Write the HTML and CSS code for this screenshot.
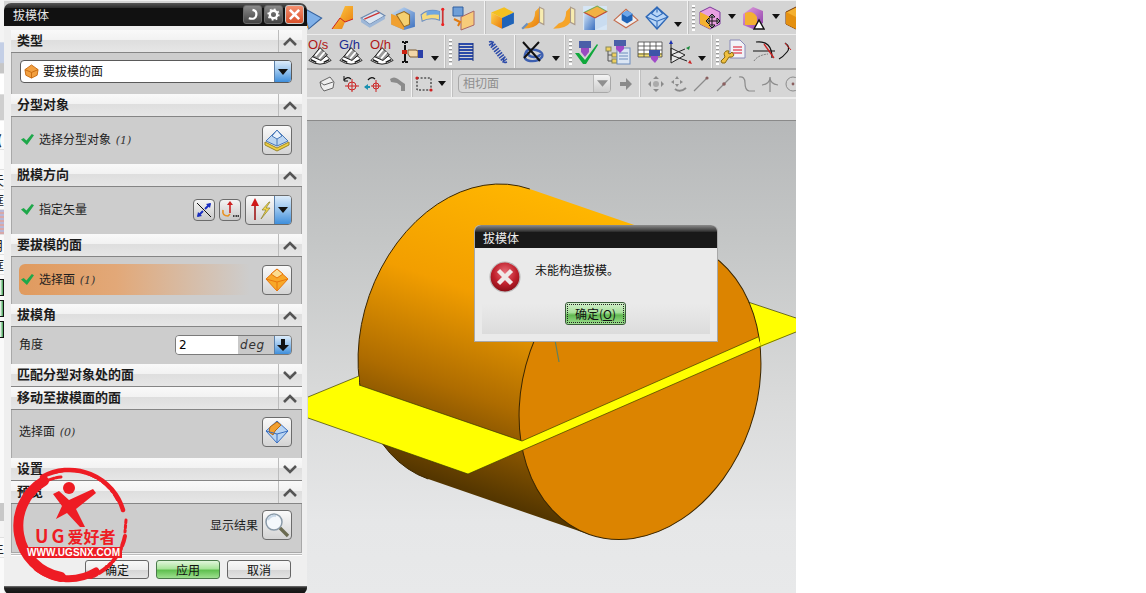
FILE: index.html
```html
<!DOCTYPE html>
<html lang="zh">
<head>
<meta charset="utf-8">
<title>拔模体</title>
<link rel="stylesheet" href="styles.css">
</head>
<body>
<svg class="defs" width="0" height="0" aria-hidden="true">
  <defs>
    <linearGradient id="side" gradientUnits="userSpaceOnUse" x1="535" y1="190" x2="435" y2="479">
      <stop offset="0" stop-color="#ffb600"/><stop offset=".38" stop-color="#f29e00"/><stop offset=".7" stop-color="#ae6c00"/><stop offset="1" stop-color="#543600"/>
    </linearGradient>
    <linearGradient id="org" x1="0" y1="0" x2="1" y2="1"><stop offset="0" stop-color="#ffd24a"/><stop offset="1" stop-color="#e8780a"/></linearGradient>
    <linearGradient id="blu" x1="0" y1="0" x2="1" y2="1"><stop offset="0" stop-color="#cfe3f7"/><stop offset="1" stop-color="#3a6fbf"/></linearGradient>
    <linearGradient id="pur" x1="0" y1="0" x2="1" y2="1"><stop offset="0" stop-color="#e6a2e0"/><stop offset="1" stop-color="#8a3ba8"/></linearGradient>
    <radialGradient id="err" cx=".5" cy=".35" r=".7"><stop offset="0" stop-color="#e8707a"/><stop offset=".55" stop-color="#c0202c"/><stop offset="1" stop-color="#7c0a12"/></radialGradient>
    <symbol id="shell" viewBox="0 0 26 26">
      <path d="M1 20 Q13 28 25 20 L20 15 Q13 20 6 15Z" fill="#fff" stroke="#111"/>
      <path d="M5 16 L13 6 L21 14 L14 20Z" fill="#999" stroke="#111"/>
      <path d="M8 15 L14 8 M12 18 L18 11" stroke="#fff" stroke-width="2"/>
      <path d="M3 19 L9 22 M23 19 L17 22" stroke="#111" stroke-width="1.500"/>
    </symbol>
    <symbol id="coil" viewBox="0 0 24 24">
      <path d="M5 4h14M5 7h14M5 10h14M5 13h14M5 16h14M5 19h14" stroke="#2c4aa8" stroke-width="2"/>
      <path d="M5 3v18M19 3v18" stroke="#16307f" stroke-width="1"/>
    </symbol>
    <symbol id="dd" viewBox="0 0 8 5"><path d="M0 0h8L4 5z" fill="#111"/></symbol>
    <symbol id="chk" viewBox="0 0 12 12"><path d="M0 6l2.500-1.500L5 7 10 1l2 1-6.500 9z" fill="#1ea84a"/></symbol>
    <symbol id="up" viewBox="0 0 14 9"><path d="M1 8L7 2l6 6" fill="none" stroke="#555" stroke-width="2.600"/></symbol>
    <symbol id="down" viewBox="0 0 14 9"><path d="M1 1l6 6 6-6" fill="none" stroke="#555" stroke-width="2.600"/></symbol>
  </defs>
</svg>

<div class="screen">
  <div class="app">
    <div class="tb tb1">
      <div class="tg g30">
        <svg class="ic" viewBox="0 0 24 24"><path d="M2 2l18 10-12 10z" fill="#7fb0e8" stroke="#36639f"/><path d="M2 2l6 20-6-4z" fill="#f0a030"/></svg>
        <svg class="ic" viewBox="0 0 24 26"><path d="M9 13L14 1h8v13l-8 3-3 7H1z" fill="url(#org)"/><path d="M1 24l8-11 5 4 8-3" fill="none" stroke="#c22" stroke-width="1"/></svg>
        <svg class="ic" viewBox="0 0 24 24"><path d="M1 12L15 5l8 5-14 8z" fill="#dbe6f2" stroke="#6a86ad"/><path d="M1 12v4l8 5 14-8v-3L9 18z" fill="#9db7d8"/><path d="M4 13l14-6" stroke="#c33" stroke-width="1.200"/></svg>
        <svg class="ic" viewBox="0 0 24 24"><path d="M1 8l12-6 10 5v13l-10 3-12-5z" fill="url(#blu)"/><path d="M1 8l12 5v10l-12-5z" fill="#f0a030"/><path d="M6 9l7-3 5 3v9l-5 2z" fill="#f5d070" stroke="#9a6b20"/></svg>
        <svg class="ic" viewBox="0 0 24 24"><path d="M1 9Q8 3 18 6v8Q9 11 2 15z" fill="#f6da7c" stroke="#6b8fc4"/><path d="M6 6Q11 4 18 6v3Q10 8 6 10z" fill="#6fa6e0"/><path d="M21 3v16" stroke="#c33" stroke-width="1.600"/><circle cx="21" cy="4" r="1.400" fill="#e22"/><circle cx="21" cy="18" r="1.400" fill="#e22"/></svg>
        <svg class="ic" viewBox="0 0 24 26"><path d="M2 2h10v9H2z" fill="#6f9fd8" stroke="#315f9f"/><path d="M10 12l13-6v14l-13 5z" fill="#f7cb7a" stroke="#a66"/><path d="M3 14l6 3-2 4" fill="none" stroke="#e07a10" stroke-width="2"/></svg>
      </div>
      <i class="sep s1"></i>
      <div class="tg g31">
        <svg class="ic" viewBox="0 0 24 24"><path d="M2 7l12-5 9 5-11 5z" fill="#f4c020"/><path d="M2 7l10 5v10L2 17z" fill="url(#org)"/><path d="M12 12l11-5v10l-11 5z" fill="#1f63b8"/></svg>
        <svg class="ic" viewBox="0 0 24 24"><path d="M18 2v14Q14 22 2 22l5-5Q14 16 14 6z" fill="url(#org)"/><path d="M18 2l4 2v14l-4-2z" fill="#f7ecb0" stroke="#a98"/><path d="M2 22l5-5" stroke="#6a90c0" stroke-width="2"/></svg>
        <svg class="ic" viewBox="0 0 24 24"><path d="M18 2v14Q14 22 2 22l5-5Q14 16 14 6z" fill="#f6a428"/><path d="M18 2l4 2v14l-4-2z" fill="#f7ecb0" stroke="#a98"/></svg>
        <svg class="ic" viewBox="0 0 24 24"><rect x="1" y="1" width="22" height="22" fill="#d6e6f6"/><path d="M2 7L14 1l9 5-11 6z" fill="#f2b144" stroke="#7a5"/><path d="M2 7l10 5v11H2z" fill="url(#blu)"/><path d="M12 12l11-6v12l-11 5z" fill="#c9dcf0"/><path d="M2 7l10 5 11-6" fill="none" stroke="#c43"/></svg>
        <svg class="ic" viewBox="0 0 24 24"><path d="M1 14L12 4l11 10-11 7z" fill="#eee" stroke="#c46a4a"/><path d="M8 8l5-3 5 3v6l-5 3-5-3z" fill="#1f63b8"/><path d="M8 8l5 3 5-3-5-3z" fill="#6fa8ea"/></svg>
        <svg class="ic" viewBox="0 0 24 24"><path d="M12 2l10 9-10 11L2 11z" fill="#b9d6f7" stroke="#2f69b8" stroke-width="1.300"/><path d="M2 11l10 4 10-4M12 15v7M12 2v5M7 8l5-6 5 6-5 3z" fill="none" stroke="#2f69b8"/></svg>
        <svg class="dd d1" viewBox="0 0 8 5"><use href="#dd"/></svg>
      </div>
      <i class="sep s2"></i>
      <i class="grip"></i>
      <svg class="ic i-m1" viewBox="0 0 24 26"><path d="M2 7l10-5 10 5v12l-10 5-10-5z" fill="#e8a0e0" stroke="#7a3a9a"/><path d="M2 7l10 5v12l-10-5z" fill="#f4b030"/><path d="M14 9v14M8 16h14M14 9l-3 3h6zM14 23l-3-3h6zM8 16l3-3v6zM22 16l-3-3v6z" fill="#fff" stroke="#111"/></svg>
      <svg class="dd d2" viewBox="0 0 8 5"><use href="#dd"/></svg>
      <svg class="ic i-m2" viewBox="0 0 24 26"><path d="M2 9l10-7 10 4v12l-10 6-10-4z" fill="url(#pur)"/><path d="M4 8q8-3 12 4v8H4z" fill="#f4b030"/><path d="M13 24l5-9 5 9z" fill="#fff" stroke="#111" stroke-width="1.400"/></svg>
      <svg class="dd d3" viewBox="0 0 8 5"><use href="#dd"/></svg>
      <svg class="ic i-m3" viewBox="0 0 24 26"><path d="M2 7l10-5 10 5v12l-10 5-10-5z" fill="#f4b030" stroke="#7a3a0a"/><path d="M2 7l10 5v12l-10-5z" fill="#e49010"/></svg>
    </div>

    <div class="tb tb2">
      <div class="tg pad2">
        <div class="txic"><svg viewBox="0 0 26 26"><use href="#shell"/></svg><span class="lab red">O/s</span></div>
        <div class="txic"><svg viewBox="0 0 26 26"><use href="#shell"/></svg><span class="lab navy">G/h</span></div>
        <div class="txic"><svg viewBox="0 0 26 26"><use href="#shell"/></svg><span class="lab red">O/h</span></div>
        <svg class="ic" viewBox="0 0 24 24"><path d="M2 2h6M2 22h6M5 2v20" stroke="#111" stroke-width="2" stroke-dasharray="2 1 20"/><rect x="2" y="10" width="5" height="4" fill="#c21"/><path d="M8 10h8l2 1v6h-8l-2-3z" fill="#f2d6a8" stroke="#7a5a30"/><rect x="18" y="10" width="5" height="8" fill="#2a3fa8"/></svg>
      </div>
      <svg class="dd d4" viewBox="0 0 8 5"><use href="#dd"/></svg>
      <i class="sep s3"></i>
      <i class="grip"></i>
      <svg class="ic i-c1" viewBox="0 0 24 24"><use href="#coil"/></svg>
      <svg class="ic i-c2" viewBox="0 0 24 24"><path d="M5 3l14 18" stroke="#2c4aa8" stroke-width="6" stroke-dasharray="1.500 1.200"/><path d="M3 2q5-2 3 4M21 22q-5 2-3-4" fill="none" stroke="#2c4aa8" stroke-width="1.500"/></svg>
      <i class="sep s4"></i>
      <svg class="ic i-c3" viewBox="0 0 24 24"><path d="M6 12q-4 8 4 9t12-4q2-5-6-7t-10 2zM8 12q0 5 6 5t6-3" fill="none" stroke="#3d5fb0" stroke-width="2.400"/><path d="M3 2l17 19M19 2L4 18" stroke="#111" stroke-width="2"/></svg>
      <svg class="dd d5" viewBox="0 0 8 5"><use href="#dd"/></svg>
      <i class="sep s5"></i>
      <i class="grip"></i>
      <svg class="ic i-v1" viewBox="0 0 26 26"><path d="M2 14l4 0 6 7L24 5l1 1-12 19h-3z" fill="#10a83c"/><rect x="6" y="2" width="12" height="7" fill="#4a5fa8"/><path d="M8 9h8v4l-4 5-4-5z" fill="#9a4ac0"/></svg>
      <svg class="ic i-v2" viewBox="0 0 26 26"><rect x="1" y="8" width="5" height="4" fill="#f0d060" stroke="#885"/><rect x="7" y="14" width="5" height="4" fill="#f0d060" stroke="#885"/><rect x="7" y="20" width="5" height="4" fill="#f0d060" stroke="#885"/><path d="M3 12v10h4M3 16h4" fill="none" stroke="#555"/><rect x="12" y="9" width="13" height="16" fill="#dbe6f4" stroke="#6c8cbc"/><path d="M14 14h9M14 17h9M14 20h9" stroke="#6c8cbc"/><rect x="9" y="1" width="12" height="6" fill="#4a5fa8"/><path d="M11 7h8v3l-4 4-4-4z" fill="#a04ac8"/></svg>
      <svg class="ic i-v3" viewBox="0 0 26 26"><path d="M1 3h24v15H1z" fill="#fff"/><rect x="1" y="14" width="24" height="4" fill="#f4e070"/><path d="M1 3h24M1 7h24M1 11h24M1 15h24M1 18h24M1 3v15M7 3v15M13 3v15M19 3v15M25 3v15" stroke="#444" stroke-width=".8"/><rect x="12" y="11" width="11" height="6" fill="#3c55a8"/><path d="M14 17h7v3l-3 4-4-4z" fill="#a04ac8"/></svg>
      <svg class="ic i-v4" viewBox="0 0 26 26"><path d="M4 9l14 7-14 8z" fill="#e6e6e6" stroke="#222"/><path d="M4 3v18M4 16l14-6M4 16l16 6" stroke="#222"/><path d="M4 1l-2 4h4z" fill="#1a2fb0"/><path d="M19 9l4-2-1 4z" fill="#1a8a3a"/><path d="M21 24l4 1-2-4z" fill="#c22"/></svg>
      <svg class="dd d6" viewBox="0 0 8 5"><use href="#dd"/></svg>
      <i class="sep s6"></i>
      <i class="grip"></i>
      <svg class="ic i-t1" viewBox="0 0 26 26"><path d="M10 1h10l5 5v13H10z" fill="#f2f2f6" stroke="#8a8ab8"/><path d="M13 8h9M13 11h9M13 14h9" stroke="#e25a6a" stroke-width="1.600"/><path d="M2 24l3 0 4-6q4 1 5-2l-2-3-2 2-2-1 1-2q-4-1-5 3l1 3-4 4z" fill="#f0c040" stroke="#8a6a10"/></svg>
      <svg class="ic i-t2" viewBox="0 0 26 26"><path d="M1 12h22" stroke="#111"/><path d="M4 3q16-2 16 16" fill="none" stroke="#111" stroke-width="1.200"/><path d="M12 5l10 14" stroke="#c22" stroke-width="1.300"/><path d="M2 22q4-6 14-7" fill="none" stroke="#777" stroke-dasharray="2 1"/></svg>
      <svg class="ic i-t3" viewBox="0 0 26 26"><path d="M8 4q6 4 2 9t-8 7" fill="none" stroke="#111" stroke-width="1.200"/><path d="M8 4l6 7" stroke="#c22"/></svg>
    </div>

    <div class="tb tb3">
      <svg class="sm s-a" viewBox="0 0 18 18"><path d="M2 7l10-5 4 5-1 6-9 3-3-4z" fill="#eee" stroke="#666"/><path d="M2 7l4 3 9-3" fill="none" stroke="#666"/></svg>
      <svg class="sm s-b" viewBox="0 0 18 18"><path d="M2 5q3-4 7-1" fill="none" stroke="#111" stroke-width="1.300"/><path d="M2 1v5h4" fill="none" stroke="#111"/><circle cx="10" cy="11" r="4" fill="none" stroke="#c22"/><path d="M3 11h14M10 4v13" stroke="#c22"/></svg>
      <svg class="sm s-c" viewBox="0 0 18 18"><path d="M4 5q3-4 7-1" fill="none" stroke="#111" stroke-width="1.300"/><path d="M1 12h5" stroke="#1a90b0" stroke-width="2"/><path d="M0 12l4-3v6z" fill="#1a90b0"/><circle cx="12" cy="11" r="3" fill="none" stroke="#c22"/><path d="M7 11h10M12 5v12" stroke="#c22"/></svg>
      <svg class="sm s-d" viewBox="0 0 18 18"><path d="M1 4q4-3 8 0l4 3 3 2v7h-4v-5L8 8 2 7z" fill="#8b8b8b"/></svg>
      <i class="sep s7"></i>
      <svg class="sm s-e" viewBox="0 0 18 18"><rect x="2" y="3" width="14" height="12" fill="none" stroke="#111" stroke-dasharray="2 1.600"/><circle cx="2" cy="3" r="1.600" fill="#c22"/><circle cx="16" cy="15" r="1.600" fill="#c22"/></svg>
      <svg class="dd d7" viewBox="0 0 8 5"><use href="#dd"/></svg>
      <i class="sep s8"></i>
      <div class="combo"><span class="combo-t">相切面</span><span class="combo-b"><svg viewBox="0 0 12 7"><path d="M0 0h12L6 7z" fill="#8f8f8f"/></svg></span></div>
      <svg class="sm s-f" viewBox="0 0 14 14"><path d="M1 5h6V1l6 6-6 6V9H1z" fill="#8a8a8a"/></svg>
      <i class="sep s9"></i>
      <svg class="sm s-g" viewBox="0 0 18 18"><path d="M9 1l3 3H6zM9 17l-3-3h6zM1 9l3-3v6zM17 9l-3 3V6z" fill="#8b8b8b"/><circle cx="9" cy="9" r="3" fill="#aaa"/></svg>
      <svg class="sm s-h" viewBox="0 0 18 18"><path d="M8 1l2 3H6zM8 12l-2-3h4zM2 7l3-2v4zM14 7l-3 2V5z" fill="#8b8b8b"/><path d="M6 14q5 4 11-1" fill="none" stroke="#8b8b8b" stroke-width="2"/></svg>
      <svg class="sm s-i" viewBox="0 0 18 18"><path d="M2 16L15 3" stroke="#8b8b8b" stroke-width="1.200"/><circle cx="15" cy="3" r="1.600" fill="#8b6060"/></svg>
      <svg class="sm s-i" viewBox="0 0 18 18"><path d="M2 16L16 2" stroke="#8b8b8b" stroke-width="1.200"/><circle cx="9" cy="9" r="1.800" fill="#8b6060"/></svg>
      <svg class="sm s-i" viewBox="0 0 18 18"><path d="M1 2q6-1 6 6t4 8h6" fill="none" stroke="#8b8b8b" stroke-width="1.200"/></svg>
      <svg class="sm s-i" viewBox="0 0 18 18"><path d="M1 10q8-1 8-8 0 7 8 8M9 2v15" fill="none" stroke="#8b8b8b" stroke-width="1.200"/></svg>
      <svg class="sm s-i" viewBox="0 0 18 18"><circle cx="9" cy="9" r="7" fill="none" stroke="#8b8b8b"/><circle cx="9" cy="9" r="1.400" fill="#8b6060"/></svg>
    </div>

    <div class="tb tb4"></div>

    <div class="viewport">
      <svg class="scene" viewBox="0 121 796 472">
        <polygon points="740,299 748,302 796,318 796,332 740,356" fill="#ff0"/>
        <path d="M529.800,189 A116.300 153.600 19.300 0 0 428.200,479 L589.200,534.500 L690.800,244.500 Z" fill="url(#side)"/>
        <path d="M529.800,189 A116.300 153.600 19.300 0 0 428.200,479" fill="none" stroke="#3a2600"/>
        <g transform="translate(640 389.500) rotate(19.300)"><ellipse rx="116.300" ry="153.600" fill="#dc8400" stroke="#3a2600" stroke-width="1"/></g>
        <polygon points="308,397 359,376 359,385 522,441 758,337 761,346 468,474 308,418" fill="#ff0"/>
        <path d="M308,397 L359,376 M359,385 L522,441 L758,337 M761,346 L468,474 L308,418 M748,302 L796,318" fill="none" stroke="#3a3a00" stroke-width=".7"/>
        <path d="M796,332 L761,346" stroke="#3a3a00" stroke-width=".7"/>
        <path d="M555,340 L559,362" stroke="#5f8060" stroke-width="1.200"/>
      </svg>
    </div>
  </div>

  <div class="strip">
    <span class="top"></span>
    <span class="fr fr1">(</span>
    <span class="fr fr0"></span>
    <span class="fr fr2">天</span>
    <span class="fr fr3">框</span>
    <span class="fr fr4"></span>
    <span class="fr fr5">月</span>
    <span class="fr fr6">框</span>
    <span class="fr box"></span>
    <span class="fr box"></span>
    <span class="fr box"></span>
    <span class="fr fr7"></span>
    <span class="fr fr8">主</span>
  </div>

  <section class="dlg">
    <header class="dlg-title">
      <span class="dlg-name">拔模体</span>
      <span class="tbtn"><svg viewBox="0 0 14 14"><path d="M7 2q5 1 4 6t-8 3" fill="none" stroke="#fff" stroke-width="2.400"/></svg></span>
      <span class="tbtn"><svg viewBox="0 0 14 14"><circle cx="7" cy="7" r="4" fill="none" stroke="#fff" stroke-width="2.600"/><circle cx="7" cy="7" r="5.800" fill="none" stroke="#fff" stroke-width="1.600" stroke-dasharray="2 2.500"/></svg></span>
      <span class="tbtn close"><svg viewBox="0 0 14 14"><path d="M2 2l10 10M12 2L2 12" stroke="#fff" stroke-width="2.800"/></svg></span>
    </header>
    <div class="panel">
      <div class="hd"><span class="hd-t">类型</span><span class="hd-c"><svg viewBox="0 0 14 9"><use href="#up"/></svg></span></div>
      <div class="bd b-type">
        <div class="select">
          <svg class="sel-ic" viewBox="0 0 16 16"><path d="M8 1l7 5-1 6-6 3-6-3-1-6z" fill="#f2a040" stroke="#c86a10"/><path d="M1 6l7 3 7-3M8 9v6" fill="none" stroke="#c86a10"/></svg>
          <span class="sel-t">要拔模的面</span>
          <span class="bluebtn"><svg viewBox="0 0 10 6"><path d="M0 0h10L5 6z" fill="#111"/></svg></span>
        </div>
      </div>

      <div class="hd"><span class="hd-t">分型对象</span><span class="hd-c"><svg viewBox="0 0 14 9"><use href="#up"/></svg></span></div>
      <div class="bd b-46">
        <svg class="chk" viewBox="0 0 12 12"><use href="#chk"/></svg>
        <span class="lbl">选择分型对象 <em>(1)</em></span>
        <span class="bigbtn"><svg viewBox="0 0 26 26"><path d="M2 14l11-11 11 11-11 5z" fill="#bcd6f2" stroke="#4878b8"/><path d="M8 9l5-6 5 6-5 3z" fill="#e8f1fb" stroke="#4878b8"/><path d="M13 12v7" stroke="#4878b8"/><path d="M1 15l12 6 12-6v3l-12 6-12-6z" fill="#f0d040" stroke="#99862a"/></svg></span>
      </div>

      <div class="hd"><span class="hd-t">脱模方向</span><span class="hd-c"><svg viewBox="0 0 14 9"><use href="#up"/></svg></span></div>
      <div class="bd b-46">
        <svg class="chk" viewBox="0 0 12 12"><use href="#chk"/></svg>
        <span class="lbl">指定矢量</span>
        <span class="smbtn"><svg viewBox="0 0 18 18"><path d="M2 2l14 14" stroke="#111"/><path d="M10 8l5-5M8 10l-5 5" stroke="#1a2fc0" stroke-width="2"/><path d="M16 2l-5 1 4 4zM2 16l5-1-4-4z" fill="#1a2fc0"/></svg></span>
        <span class="smbtn sb2"><svg viewBox="0 0 18 18"><path d="M9 2v10" stroke="#c22" stroke-width="1.600"/><path d="M9 0l-3 4h6z" fill="#c22"/><path d="M2 9q-1 6 5 6l2-2" fill="none" stroke="#e89020" stroke-width="1.600"/><path d="M12 15h1.500M14.500 15h1.500M16.500 15h1.500" stroke="#111" stroke-width="1.600"/></svg></span>
        <span class="split">
          <span class="split-a"><svg viewBox="0 0 28 26"><path d="M9 3v20" stroke="#a01818" stroke-width="1.600"/><path d="M9 1L5 9h8z" fill="#d01818"/><path d="M23 5l-7 8h4l-5 9 9-11h-4l4-6z" fill="#f4d848" stroke="#8a8030" stroke-width=".7"/></svg></span>
          <span class="bluebtn"><svg viewBox="0 0 10 6"><path d="M0 0h10L5 6z" fill="#111"/></svg></span>
        </span>
      </div>

      <div class="hd"><span class="hd-t">要拔模的面</span><span class="hd-c"><svg viewBox="0 0 14 9"><use href="#up"/></svg></span></div>
      <div class="bd b-46">
        <div class="hi">
          <svg class="chk" viewBox="0 0 12 12"><use href="#chk"/></svg>
          <span class="lbl">选择面 <em>(1)</em></span>
        </div>
        <span class="bigbtn"><svg viewBox="0 0 26 26"><path d="M13 2l11 10-11 12L2 12z" fill="#f8a828" stroke="#e8760c"/><path d="M7 7l6-5 6 5-6 4z" fill="#fbdc90" stroke="#e8760c"/><path d="M2 12l11 3 11-3M13 15v9" fill="none" stroke="#e8760c"/></svg></span>
      </div>

      <div class="hd"><span class="hd-t">拔模角</span><span class="hd-c"><svg viewBox="0 0 14 9"><use href="#up"/></svg></span></div>
      <div class="bd b-36">
        <span class="lbl plain">角度</span>
        <div class="field"><span class="f-v">2</span><span class="f-u">deg</span><span class="bluebtn inner2"><svg viewBox="0 0 12 12"><path d="M4 0h4v6h4l-6 6-6-6h4z" fill="#111"/></svg></span></div>
      </div>

      <div class="hd"><span class="hd-t">匹配分型对象处的面</span><span class="hd-c"><svg viewBox="0 0 14 9"><use href="#down"/></svg></span></div>

      <div class="hd"><span class="hd-t">移动至拔模面的面</span><span class="hd-c"><svg viewBox="0 0 14 9"><use href="#up"/></svg></span></div>
      <div class="bd b-47">
        <span class="lbl plain">选择面 <em>(0)</em></span>
        <span class="bigbtn"><svg viewBox="0 0 26 26"><path d="M13 2l11 10-11 12L2 12z" fill="#b8d4f2" stroke="#3a6fc0"/><path d="M6 8l7-5 4 3-6 6-2 4-4-3z" fill="#f2a030" stroke="#b86a10"/><path d="M2 12l11 3 11-3M13 15v9" fill="none" stroke="#3a6fc0"/></svg></span>
      </div>

      <div class="hd"><span class="hd-t">设置</span><span class="hd-c"><svg viewBox="0 0 14 9"><use href="#down"/></svg></span></div>

      <div class="hd"><span class="hd-t">预览</span><span class="hd-c"><svg viewBox="0 0 14 9"><use href="#up"/></svg></span></div>
      <div class="bd end">
        <span class="lbl plain right">显示结果</span>
        <span class="bigbtn"><svg viewBox="0 0 26 26"><circle cx="10" cy="10" r="8" fill="#f4f8fc" stroke="#8a9aa8" stroke-width="1.500"/><path d="M4 8q3-5 8-4" fill="none" stroke="#c8d8e8" stroke-width="2"/><path d="M16 16l8 8" stroke="#6a6a50" stroke-width="3.400"/></svg></span>
      </div>
    </div>
    <div class="foot">
      <button class="btn">确定</button>
      <button class="btn green">应用</button>
      <button class="btn">取消</button>
    </div>
    <div class="dlg-bottom"></div>
  </section>

  <svg class="logo" viewBox="0 0 120 122">
    <g fill="none" stroke="#ee1c24" stroke-linecap="round">
      <path d="M52 113 A52 52 0 0 1 35 17" stroke-width="10"/>
      <path d="M87 107 A52 52 0 0 1 28 104" stroke-width="7"/>
      <path d="M33 13 A56 56 0 0 1 114 46" stroke-width="4.500"/>
      <path d="M45 9 A54 54 0 0 1 108 36" stroke-width="2" stroke-dasharray="9 3 2 3"/>
      <path d="M116 72 A56 56 0 0 1 82 113" stroke-width="4" stroke-dasharray="10 3 3 2"/>
      <path d="M20 30 A50 50 0 0 1 52 13" stroke-width="3" stroke-dasharray="6 2"/>
      <path d="M117 56 L116 68" stroke-width="3" stroke-dasharray="3 2"/>
    </g>
    <circle cx="60" cy="24" r="6" fill="#ee1c24"/>
    <path d="M44 30 L50 27 L60 36 L84 25 L87 29 L67 45 L76 63 L71 63 L58 49 L47 55 L53 42 Z" fill="#ee1c24"/>
    <text class="logo-a" x="26" y="79"><tspan class="logo-ug">UG</tspan>爱好者</text>
    <rect class="logo-band" x="17" y="83" width="96" height="11"/>
    <text class="logo-b" x="18" y="92" textLength="93">WWW.UGSNX.COM</text>
  </svg>

  <section class="msg">
    <header class="msg-title">拔模体</header>
    <div class="msg-body">
      <svg class="msg-ic" viewBox="0 0 32 32"><circle cx="16" cy="16" r="15" fill="url(#err)" stroke="#bbb" stroke-width="1.200"/><path d="M9.500 9.500l13 13M22.500 9.500l-13 13" stroke="#f0e8e8" stroke-width="4.400"/></svg>
      <span class="msg-t">未能构造拔模。</span>
    </div>
    <div class="msg-foot"><button class="ok">确定(<u>O</u>)</button></div>
  </section>
</div>
</body>
</html>
```

FILE: styles.css
```css
* { box-sizing: border-box; }
html, body { margin: 0; padding: 0; background: #fff; }
body { font-family: "Noto Sans CJK SC", "Liberation Sans", sans-serif; overflow: hidden; }
.defs { position: absolute; }
.screen { position: relative; width: 1146px; height: 593px; overflow: hidden; background: #fff; }
.app { width: 796px; height: 593px; display: flex; flex-direction: column; }

/* toolbars */
.tb { display: flex; align-items: center; flex: none; background: #d4d4d4; padding-left: 298px; overflow: hidden; }
.tb1 { height: 35px; border-top: 1px solid #f0f0f0; border-bottom: 1px solid #ececec; padding-left: 300px; }
.tb2 { height: 35px; background: #d2d2d2; border-bottom: 2px solid #a9a9a9; }
.tb3 { height: 29px; background: #d6d6d6; border-bottom: 2px solid #ececec; }
.tb4 { height: 22px; background: #dbdbdb; border-bottom: 1px solid #8a8a8a; }
.tg { display: flex; align-items: center; flex: none; }
.g30 { gap: 4px; }
.g31 { gap: 5px; }
.ic { width: 24px; height: 24px; flex: none; display: block; }
.tb1 .ic { width: 26px; height: 26px; }
.txic { position: relative; width: 26px; height: 28px; flex: none; }
.txic svg { position: absolute; left: 0; top: 4px; width: 26px; height: 24px; }
.lab { position: absolute; left: 1px; top: 0; font: 13px/13px "Liberation Sans", sans-serif; }
.red { color: #b01818; }
.navy { color: #1a2a90; }
.pad2 { margin-left: 9px; gap: 5px; }
.dd { width: 8px; height: 5px; flex: none; margin-top: 14px; }
.d1 { margin-left: -1px; }
.d2 { margin-left: 5px; margin-top: -2px; }
.d3 { margin-left: 7px; margin-top: -2px; }
.d4 { margin-left: 7px; }
.d5 { margin-left: 8px; }
.d6 { margin-left: 5px; }
.d7 { margin-left: 5px; margin-top: 0; }
.sep { display: block; flex: none; width: 2px; align-self: stretch; background: linear-gradient(90deg, #f2f2f2 50%, #c0c0c0 50%); }
.s1 { margin-left: 8px; margin-right: 3px; }
.s2 { margin-left: 5px; }
.s3 { margin-left: 5px; }
.s4 { margin-left: 4px; }
.s5 { margin-left: 4px; }
.s6 { margin-left: 5px; }
.s7 { margin-left: 4px; }
.s8 { margin-left: 5px; }
.s9 { margin-left: 6px; }
.grip { display: block; flex: none; width: 3px; height: 26px; margin-left: 3px; background: repeating-linear-gradient(180deg, #fff 0 2px, #9a9a9a 2px 3px, transparent 3px 4px); }
.tb1 .i-m1 { margin-left: 2px; }
.tb1 .i-m2 { margin-left: 5px; width: 24px; }
.tb1 .i-m3 { margin-left: 3px; }
.i-c1 { margin-left: 2px; }
.i-c2 { margin-left: 8px; }
.i-c3 { margin-left: 4px; }
.i-v1 { margin-left: 1px; width: 26px; height: 26px; }
.i-v2 { margin-left: 6px; width: 26px; height: 26px; }
.i-v3 { margin-left: 6px; width: 26px; height: 26px; }
.i-v4 { margin-left: 4px; width: 26px; height: 26px; }
.i-t1 { margin-left: 1px; width: 26px; height: 26px; }
.i-t2 { margin-left: 6px; width: 26px; height: 26px; }
.i-t3 { margin-left: -1px; width: 26px; height: 26px; }
.sm { width: 18px; height: 18px; flex: none; display: block; }
.s-a { margin-left: 20px; }
.s-b { margin-left: 6px; }
.s-c { margin-left: 4px; }
.s-d { margin-left: 7px; }
.s-e { margin-left: 2px; }
.s-f { margin-left: 8px; width: 14px; height: 14px; }
.s-g { margin-left: 6px; }
.s-h { margin-left: 4px; }
.s-i { margin-left: 5px; }
.combo { display: flex; flex: none; width: 153px; height: 19px; margin-left: 5px; border: 1px solid #a8a8a8; border-radius: 4px; background: #d9d9d9; }
.combo-t { flex: 1; font-size: 12px; line-height: 16px; color: #8e8e8e; padding-left: 4px; }
.combo-b { width: 17px; display: flex; align-items: center; justify-content: center; background: linear-gradient(#f4f4f4, #cdcdcd); border-left: 1px solid #b8b8b8; border-radius: 0 3px 3px 0; }
.combo-b svg { width: 11px; height: 7px; }

/* viewport */
.viewport { flex: 1; min-height: 0; background: linear-gradient(#b6b8b9 0%, #c4c6c6 25%, #dadbdb 60%, #e6e7e8 85%, #e8e9ea 100%); }
.scene { display: block; width: 796px; height: 472px; }

/* left strip */
.strip { position: absolute; left: 0; top: 0; width: 4px; height: 593px; display: flex; flex-direction: column; overflow: hidden; background: #fafafa; font-size: 13px; line-height: 20px; color: #222; }
.top { display: block; flex: none; height: 130px; background: linear-gradient(#f4f4f4 0 32%, #c4cfe6 33% 48%, #c6c6c6 49% 56%, #fff 57% 72%, #cfcfcf 73% 92%, #fff 93%); }
.fr { display: block; flex: none; height: 20px; white-space: nowrap; text-indent: -9px; border-bottom: 1px solid #e0e0e0; }
.fr1 { font-weight: 700; text-indent: -3px; }
.fr4 { height: 25px; background: repeating-linear-gradient(180deg, #b8b8d8 0 2px, #d8a8a8 2px 4px); }
.box { border: 1px solid #111; border-left: 0; height: 17px; margin-top: 4px; background: linear-gradient(90deg, #fff 0, #3ca050 100%); }
.fr7 { height: 200px; background: linear-gradient(#fafafa 0 83%, #c8c8c8 83% 92%, #f4f4f4 92%); }

/* dialog */
.dlg { position: absolute; left: 4px; top: 3px; width: 303px; height: 590px; display: flex; flex-direction: column; background: #efefef; border-radius: 7px 7px 0 0; }
.dlg-title { flex: none; height: 23px; display: flex; align-items: center; gap: 2px; padding: 0 3px 0 9px; background: linear-gradient(#565656 0, #2a2a2a 22%, #111 23%, #111 100%); border-radius: 7px 7px 0 0; }
.dlg-name { flex: 1; color: #e6e6e6; font-size: 12px; }
.tbtn { width: 19px; height: 19px; border-radius: 3px; display: flex; align-items: center; justify-content: center; background: linear-gradient(#8a8a8a, #444); border: 1px solid #6a6a6a; }
.tbtn svg { width: 13px; height: 13px; }
.close { background: linear-gradient(#f49070, #d8502a); border-color: #c9c9c9; }
.panel { flex: none; margin: 4px 0 0 7px; width: 291px; display: flex; flex-direction: column; }
.hd { flex: none; height: 23px; display: flex; background: linear-gradient(#f9f9f9 0, #f2f2f2 45%, #dedede 46%, #e6e6e6 100%); border-bottom: 1px solid #858585; }
.hd-t { flex: 1; font-size: 13px; font-weight: 700; line-height: 20px; padding-left: 6px; color: #1c1c1c; border-right: 1px solid #bcbcbc; }
.hd-c { width: 23px; display: flex; align-items: center; justify-content: center; padding-right: 2px; }
.hd-c svg { width: 14px; height: 9px; }
.bd { flex: none; display: flex; align-items: center; background: #cdcdcd; border-left: 1px solid #a8a8a8; border-right: 1px solid #a8a8a8; padding: 0 9px 0 7px; }
.b-type { height: 41px; padding: 0 9px 4px 8px; }
.b-46 { height: 47px; padding-bottom: 2px; }
.b-47 { height: 48px; padding-bottom: 5px; }
.b-36 { height: 37px; padding-bottom: 2px; }
.end { height: 49px; padding-bottom: 6px; border-bottom: 1px solid #a8a8a8; }
.chk { width: 13px; height: 13px; flex: none; margin-left: 2px; }
.lbl { flex: 1; font-size: 12px; color: #1e1e1e; margin-left: 5px; padding-bottom: 2px; white-space: nowrap; }
.lbl em { font-family: "DejaVu Serif", serif; font-size: 11px; font-style: italic; color: #333; margin-left: 2px; }
.plain { margin-left: 0; }
.right { text-align: right; padding-right: 4px; }
.select { flex: 1; height: 23px; display: flex; align-items: center; background: #fff; border: 1px solid #5a5a5a; border-radius: 4px; padding-left: 3px; }
.sel-ic { width: 15px; height: 15px; flex: none; }
.sel-t { flex: 1; font-size: 12px; margin-left: 4px; color: #111; padding-bottom: 2px; }
.bluebtn { width: 17px; align-self: stretch; display: flex; align-items: center; justify-content: center; background: linear-gradient(#dcecfb 0, #9cc6ee 45%, #3f8fdc 100%); border-left: 1px solid #5a7fa8; border-radius: 0 3px 3px 0; }
.bluebtn svg { width: 10px; height: 6px; }
.inner2 svg { width: 12px; height: 12px; }
.bigbtn { width: 30px; height: 30px; flex: none; display: flex; align-items: center; justify-content: center; background: linear-gradient(#fafafa, #d4d4d4); border: 1px solid #6c6c6c; border-radius: 4px; }
.bigbtn svg { width: 26px; height: 26px; }
.smbtn { width: 22px; height: 22px; flex: none; display: flex; align-items: center; justify-content: center; background: linear-gradient(#f4f4f4, #c8c8c8); border: 1px solid #6c6c6c; border-radius: 4px; }
.smbtn svg { width: 18px; height: 18px; }
.sb2 { margin-left: 4px; }
.split { width: 47px; height: 30px; flex: none; margin-left: 4px; display: flex; border: 1px solid #6c6c6c; border-radius: 4px; background: linear-gradient(#fafafa, #d0d0d0); }
.split-a { flex: 1; display: flex; align-items: center; justify-content: center; }
.split-a svg { width: 28px; height: 26px; }
.hi { flex: 1; height: 31px; display: flex; align-items: center; border-radius: 6px; background: linear-gradient(90deg, #e09a5e 0, #e2a878 40%, #cdcdcd 95%); }
.field { margin-left: auto; width: 117px; height: 20px; flex: none; display: flex; align-items: center; background: #c9c9c9; border: 1px solid #7a7a7a; border-radius: 4px; }
.f-v { width: 62px; align-self: stretch; background: #fff; font: 12px/18px "DejaVu Sans", sans-serif; padding-left: 3px; border-radius: 3px 0 0 3px; }
.f-u { flex: 1; font: italic 12px/18px "DejaVu Sans", sans-serif; letter-spacing: .8px; color: #333; padding-left: 2px; }
.foot { flex: none; margin: 2px 0 0 7px; width: 291px; height: 30px; border-top: 1px solid #fff; display: flex; justify-content: flex-end; gap: 7px; padding: 4px 11px 0 0; box-shadow: 0 -1px 0 #bcbcbc; }
.btn { width: 64px; height: 19px; padding: 0; font: 12px/15px "Noto Sans CJK SC", sans-serif; color: #111; border: 1px solid #666; border-radius: 3px; background: linear-gradient(#f8f8f8, #ececec 50%, #d4d4d4 51%, #e4e4e4); }
.green { background: linear-gradient(#e2f6dc, #a8e49a 45%, #60c050 55%, #9ee090); border-color: #4a7a4a; }
.dlg-bottom { flex: none; height: 8px; margin-top: 1px; background: linear-gradient(#777 0, #222 25%, #111 100%); border-radius: 0 0 6px 6px; }

/* logo */
.logo { position: absolute; left: 9px; top: 464px; width: 120px; height: 122px; overflow: visible; }
.logo-a { font: 700 16px "Noto Sans CJK SC", sans-serif; fill: #ee1c24; }
.logo-ug { font-size: 18px; letter-spacing: 3px; }
.logo-band { fill: #ee1c24; }
.logo-b { font: 700 10px "Liberation Sans", sans-serif; fill: #fff; }

/* message box */
.msg { position: absolute; left: 474px; top: 225px; width: 244px; height: 117px; display: flex; flex-direction: column; background: #eaeaea; border: 1px solid #a8a8a8; border-top: 0; border-radius: 6px 6px 0 0; }
.msg-title { flex: none; height: 23px; padding-left: 8px; color: #eee; font-size: 12px; line-height: 26px; background: linear-gradient(#8c8c8c 0, #333 28%, #191919 30%, #191919 100%); border-radius: 6px 6px 0 0; }
.msg-body { flex: 1; display: flex; align-items: flex-start; padding: 13px 0 0 14px; }
.msg-ic { width: 32px; height: 32px; flex: none; }
.msg-t { font-size: 12px; margin: 0 0 0 14px; color: #111; }
.msg-foot { flex: none; height: 30px; margin: 0 7px 7px; display: flex; justify-content: center; background: linear-gradient(#eaeaea, #dcdcdc); }
.ok { width: 61px; height: 23px; padding: 0; margin-top: -2px; margin-right: 1px; font: 12px/18px "Noto Sans CJK SC", sans-serif; color: #111; border: 1px solid #3a5a3a; border-radius: 3px; outline: 1px dotted #222; outline-offset: -3px; background: linear-gradient(#d4f0cc, #a8e09c 45%, #60b850 58%, #9ee090); }
```
